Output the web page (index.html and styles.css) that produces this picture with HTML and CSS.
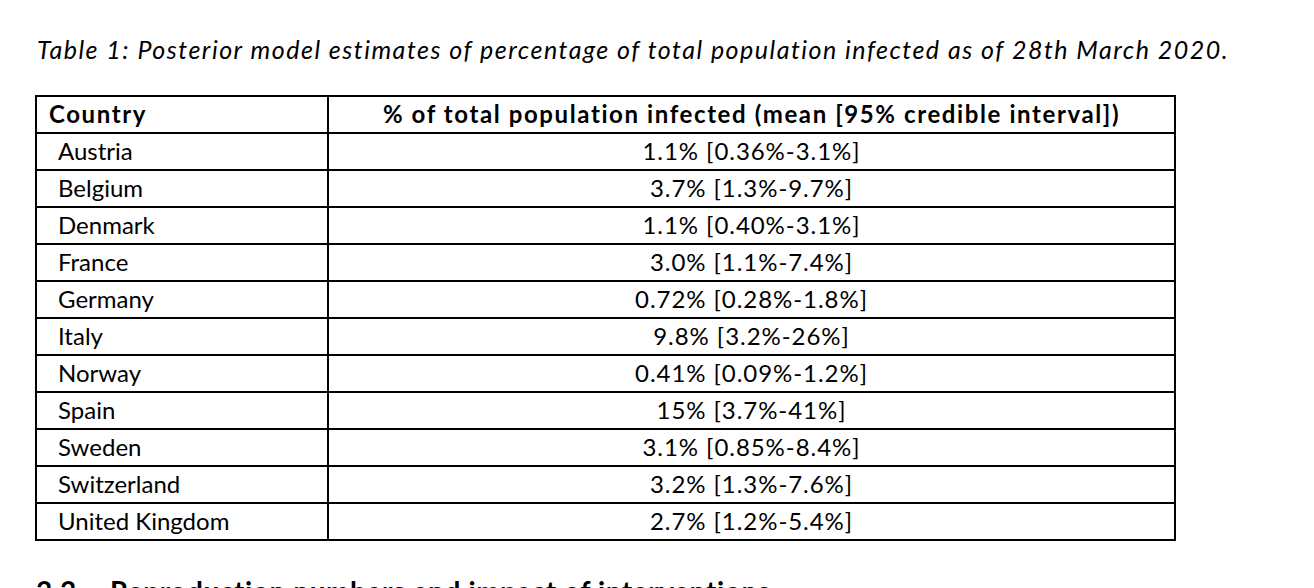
FILE: index.html
```html
<!DOCTYPE html>
<html lang="en">
<head>
<meta charset="utf-8">
<title>Table 1</title>
<link rel="stylesheet" href="styles.css">
</head>
<body>
<div class="page">
  <p class="caption">Table 1: Posterior model estimates of percentage of total population infected as of 28th March 2020.</p>
  <table class="data">
    <thead>
      <tr><th class="c1">Country</th><th class="c2">% of total population infected (mean [95% credible interval])</th></tr>
    </thead>
    <tbody>
      <tr><td class="c1">Austria</td><td class="c2">1.1% [0.36%-3.1%]</td></tr>
      <tr><td class="c1">Belgium</td><td class="c2">3.7% [1.3%-9.7%]</td></tr>
      <tr><td class="c1">Denmark</td><td class="c2">1.1% [0.40%-3.1%]</td></tr>
      <tr><td class="c1">France</td><td class="c2">3.0% [1.1%-7.4%]</td></tr>
      <tr><td class="c1">Germany</td><td class="c2">0.72% [0.28%-1.8%]</td></tr>
      <tr><td class="c1">Italy</td><td class="c2">9.8% [3.2%-26%]</td></tr>
      <tr><td class="c1">Norway</td><td class="c2">0.41% [0.09%-1.2%]</td></tr>
      <tr><td class="c1">Spain</td><td class="c2">15% [3.7%-41%]</td></tr>
      <tr><td class="c1">Sweden</td><td class="c2">3.1% [0.85%-8.4%]</td></tr>
      <tr><td class="c1">Switzerland</td><td class="c2">3.2% [1.3%-7.6%]</td></tr>
      <tr><td class="c1">United Kingdom</td><td class="c2">2.7% [1.2%-5.4%]</td></tr>
    </tbody>
  </table>
  <h2 class="section"><span class="num">3.3</span>Reproduction numbers and impact of interventions</h2>
</div>
</body>
</html>
```
FILE: styles.css
```css
html, body {
  margin: 0;
  padding: 0;
  background: #ffffff;
}
body {
  font-family: Lato, "Liberation Sans", sans-serif;
  color: #000;
  overflow: hidden;
}
.page {
  padding: 0 0 0 35px;
  height: 588px;
  overflow: hidden;
}
.caption {
  margin: 0;
  padding-top: 35px;
  padding-left: 2px;
  font-style: italic;
  font-size: 25px;
  letter-spacing: 1.5px;
  line-height: 28px;
  white-space: nowrap;
}
.data {
  margin-top: 32px;
  border-collapse: collapse;
  width: 1141px;
  border: 2px solid #000;
  font-size: 24px;
}
.data th, .data td {
  border: 2px solid #000;
  height: 37px;
  padding: 0 0 2px 0;
  box-sizing: border-box;
  line-height: 33px;
  white-space: nowrap;
}
.data th {
  font-weight: 700;
  letter-spacing: 1.6px;
}
.data .c1 {
  width: 292px;
  text-align: left;
}
.data th.c1 {
  padding-left: 12px;
}
.data td.c1 {
  padding-left: 21px;
}
.data .c2 {
  text-align: center;
}
.data td.c2 {
  letter-spacing: 0.95px;
}
.section {
  margin: 0;
  padding-top: 34px;
  padding-left: 1px;
  font-size: 28px;
  font-weight: 700;
  letter-spacing: 0.6px;
  line-height: 32px;
  white-space: nowrap;
}
.section .num {
  display: inline-block;
  width: 74px;
}
```
